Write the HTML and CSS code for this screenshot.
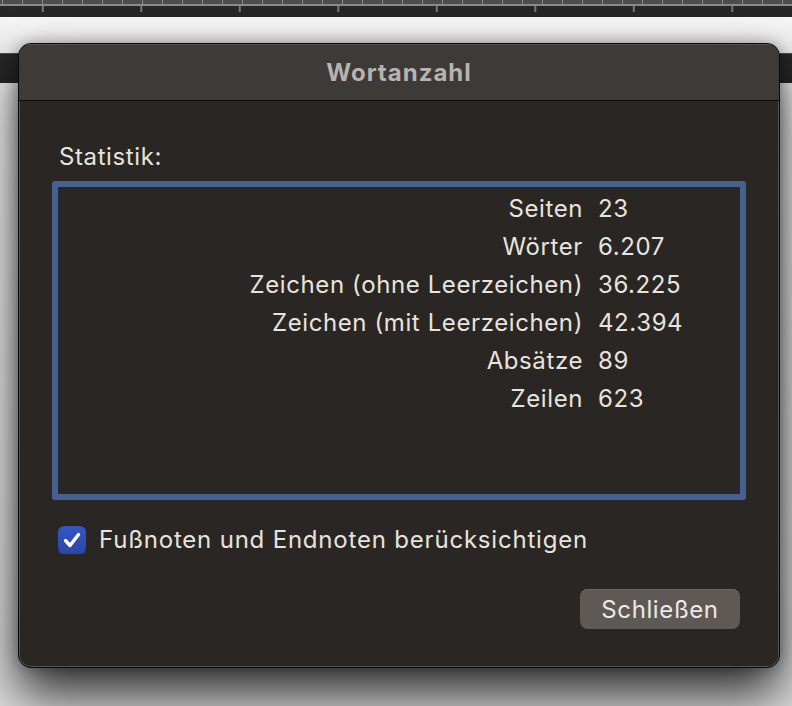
FILE: index.html
```html
<!DOCTYPE html>
<html lang="de">
  <head>
    <meta charset="utf-8">
    <title>Wortanzahl</title>
    <link rel="stylesheet" href="styles.css">
  </head>

  <body>
    <!-- document window behind the sheet -->
    <div class="ruler">
      <div class="rulerCells"></div>
      <div class="rulerTicks"></div>
    </div>
    <div class="page"></div>
    <div class="toolbarBand"></div>
    <div class="desk"></div>

    <div class="sheet">
      <div class="titleBar">Wortanzahl</div>

      <div class="sheetBody">
        <div class="groupLabel">Statistik:</div>

        <div class="statsBox">
          <div class="statsGrid">
            <span class="statName">Seiten</span><span class="statValue">23</span>
            <span class="statName">Wörter</span><span class="statValue">6.207</span>
            <span class="statName">Zeichen (ohne Leerzeichen)</span><span class="statValue">36.225</span>
            <span class="statName">Zeichen (mit Leerzeichen)</span><span class="statValue">42.394</span>
            <span class="statName">Absätze</span><span class="statValue">89</span>
            <span class="statName">Zeilen</span><span class="statValue">623</span>
          </div>
        </div>

        <label class="checkRow">
          <span class="checkBox">
            <svg width="28" height="28" viewBox="0 0 28 28">
              <path d="M7.5 14.5 L12 19.5 L20.5 8.5" fill="none" stroke="#ffffff" stroke-width="3.4" stroke-linecap="round" stroke-linejoin="round"/>
            </svg>
          </span>
          Fußnoten und Endnoten berücksichtigen
        </label>

        <div class="buttonRow">
          <button class="button">Schließen</button>
        </div>
      </div>
    </div>
  </body>
</html>
```

FILE: styles.css
```css
body {
  margin: 0;
  width: 792px;
  height: 706px;
  overflow: hidden;
  background-color: #e4e4e4;
  font-family: Inter, "Open Sans", sans-serif;
  position: relative;
}

.ruler {
  height: 17px;
  background-color: #262626;
}

.rulerCells {
  height: 4px;
  border-bottom: 2px solid #8a8a8a;
  background-color: #4c4c4c;
  background-image: linear-gradient(90deg, transparent 19px, #8a8a8a 19px, #8a8a8a 21px, transparent 21px);
  background-size: 20px 4px;
  background-position: 3px 0;
}

.rulerTicks {
  height: 6px;
  background-image: linear-gradient(90deg, transparent 42px, #777777 42px, #777777 44px, transparent 44px);
  background-size: 98.5px 6px;
}

.page {
  height: 36px;
  background: linear-gradient(#f6f6f6, #ececec);
}

.toolbarBand {
  height: 30px;
  background-color: #272727;
  border-top: 1px solid #505050;
  box-sizing: border-box;
}

.desk {
  height: 623px;
  background: linear-gradient(#f2f2f2, #dcdcdc);
}

/* modal sheet that floats over the window */
.sheet {
  position: absolute;
  left: 18px;
  top: 43px;
  width: 762px;
  height: 625px;
  box-sizing: border-box;
  border: 1px solid #0c0b0a;
  border-radius: 13px;
  background-color: #2a2623;
  box-shadow: inset 0 0 0 1px #57524f, 0 26px 50px rgba(0, 0, 0, 0.8), 0 0 14px rgba(0, 0, 0, 0.3);
  overflow: hidden;
  display: flex;
  flex-direction: column;
}

.titleBar {
  height: 56px;
  flex-shrink: 0;
  display: flex;
  justify-content: center;
  align-items: center;
  background-color: #3e3a38;
  border-bottom: 1px solid #0f0d0c;
  box-shadow: inset 0 1px 0 #57524f;
  color: #b7b3af;
  font-size: 24px;
  font-weight: bold;
  letter-spacing: 1px;
}

.sheetBody {
  flex: 1;
  padding: 0 33px 0 33px;
  display: flex;
  flex-direction: column;
  color: #e7e3df;
  letter-spacing: 0.6px;
}

.groupLabel {
  margin-top: 43px;
  margin-left: 7px;
  font-size: 24px;
  line-height: 26px;
}

.statsBox {
  margin-top: 11px;
  height: 319px;
  box-sizing: border-box;
  border: 6px solid #46618f;
  border-radius: 3px;
  box-shadow: inset 0 0 0 1px #1e2838;
}

.statsGrid {
  display: grid;
  grid-template-columns: 525px 1fr;
  column-gap: 15px;
  padding-top: 3px;
  font-size: 24px;
  line-height: 38px;
}

.statName {
  text-align: right;
}

.checkRow {
  margin-top: 26px;
  margin-left: 6px;
  display: flex;
  align-items: center;
  gap: 13px;
  font-size: 24px;
  line-height: 28px;
  letter-spacing: 0.8px;
}

.checkBox {
  width: 28px;
  height: 28px;
  border-radius: 6px;
  background: linear-gradient(#3556c2, #2a47a8);
  display: flex;
}

.buttonRow {
  margin-top: 35px;
  padding-right: 6px;
  display: flex;
  justify-content: flex-end;
}

.button {
  width: 160px;
  height: 40px;
  border: 0px;
  border-radius: 8px;
  background-color: #5e5955;
  box-shadow: inset 0 1px 0 #6c6763;
  color: #ece8e4;
  font-family: Inter, "Open Sans", sans-serif;
  font-size: 24px;
  letter-spacing: 0.6px;
}
```
